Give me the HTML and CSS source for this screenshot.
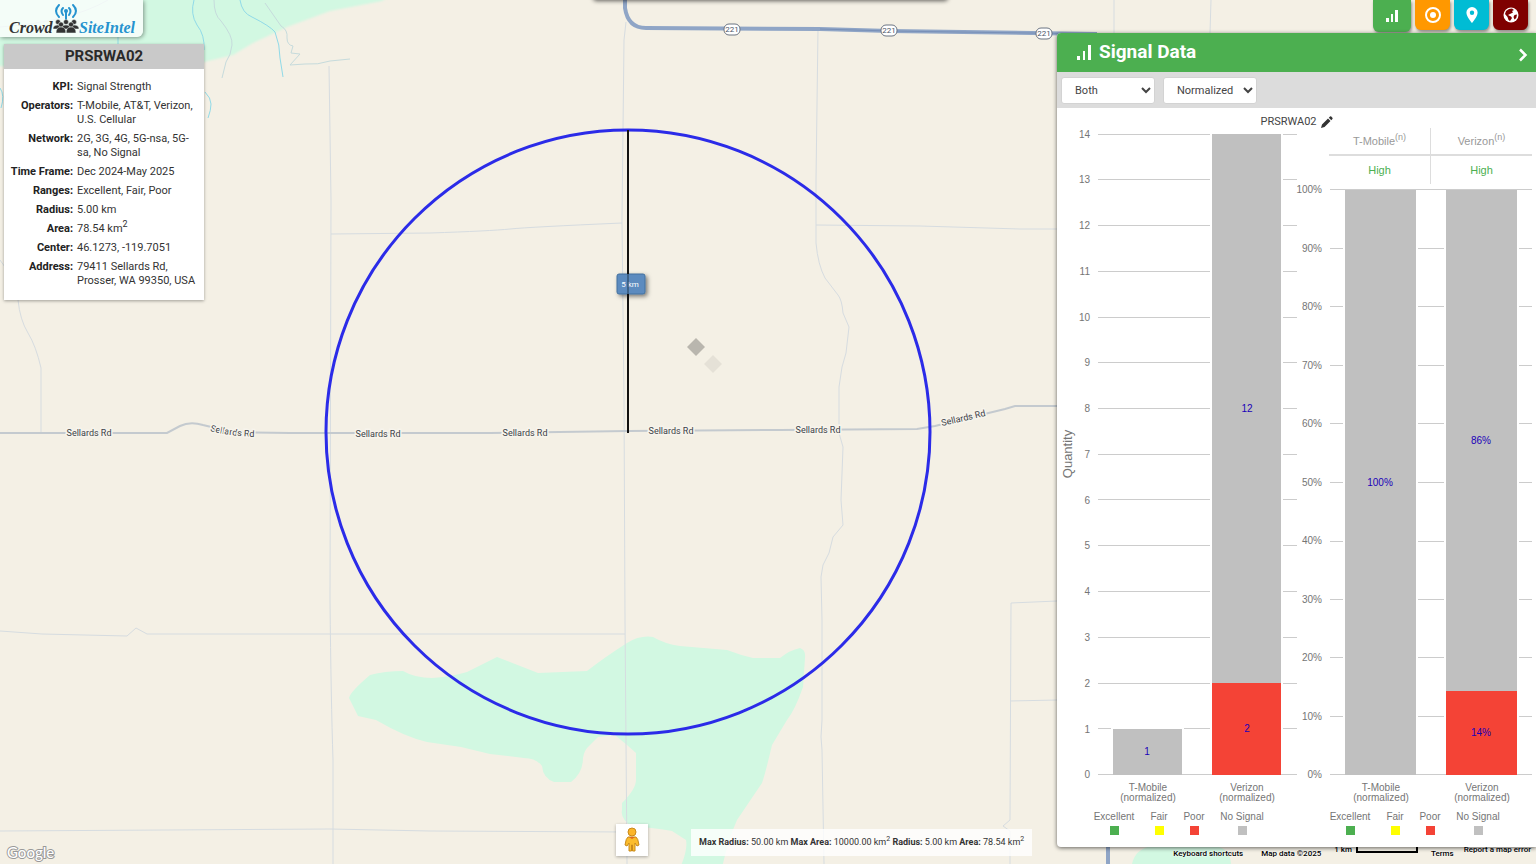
FILE: index.html
```html
<!DOCTYPE html>
<html lang="en">
<head>
<meta charset="utf-8">
<title>Crowd SiteIntel</title>
<link rel="stylesheet" href="styles.css">
</head>
<body>
<main class="app">
  <svg class="map" viewBox="0 0 1536 864" preserveAspectRatio="xMidYMid slice" role="img" aria-label="Map">
    <defs>
      <filter id="soft"><feGaussianBlur stdDeviation="1"/></filter>
      <filter id="tagShadow" x="-50%" y="-50%" width="200%" height="200%"><feDropShadow dx="2" dy="2" stdDeviation="2" flood-opacity=".5"/></filter>
      <path id="bend" d="M210 431Q232 437 264 437"/>
    </defs>
    <g class="park">
      <path filter="url(#soft)" d="M-5 -5H390L382 1L330 11L287 27L253 43L233 55L204 62L100 70L-5 66Z"/>
      <path d="M349 698Q350 692 370 675Q385 671 403 671Q415 678 432 678Q450 677 467 672L497 657L538 673L587 671Q605 657 627 643Q640 635 653 637Q665 644 680 646L727 650Q740 655 753 658L780 658Q790 650 800 648Q806 650 805 658L803 687Q795 710 787 720L772 745Q765 775 762 783L737 820Q728 840 722 868H680Q688 850 686 840L672 831Q650 827 633 827Q620 819 622 810V803Q636 789 636 780V753L627 745L615 735L598 737L590 745Q584 750 583 758Q583 773 571 782H554Q543 778 542 766Q536 758 524 758L490 754L461 747L427 742Q405 737 376 720L358 716Z"/>
      <path d="M1132 864Q1135 850 1150 846H1215Q1230 848 1231 864Z"/>
    </g>
    <g class="river">
      <path d="M194 0Q190 14 197 25Q205 35 204 50"/>
      <path d="M240 0Q242 13 252 17Q270 26 275 32Q280 45 280 58L283 77"/>
      <path d="M205 92Q211 98 211 104Q211 110 208 118M0 88Q5 95 1 108M118 37V45"/>
    </g>
    <g class="trail">
      <path d="M214 0Q214 15 221 21Q233 36 232 45Q231 55 226 62L222 78"/>
      <path d="M265 3L281 26Q288 30 287 38Q287 45 293 46L291 53L300 54L290 65L305 64Q318 65 330 61Q340 60 350 59"/>
      <path d="M0 27Q70 22 108 0"/>
    </g>
    <g class="lane">
      <path d="M329 66L331 200L330 600Q331 700 333 760V864"/>
      <path d="M331 234L430 233Q490 231 510 229T622 223"/>
      <path d="M626 22L624 40L622 220L624 400L625 620L627 864"/>
      <path d="M818 29L816 180V243Q818 265 825 278L838 295Q842 300 843 313L849 327L846 353L842 367L839 387V433L843 447L841 500L843 525L833 537L829 553L823 565L821 577L822 620V720L821 737L822 750L824 864"/>
      <path d="M816 225L920 226L1020 229H1057M1057 601L1011 603L1010 820L1003 826L1010 831V864M1010 701L1057 700M1114 0V33M1211 0L1210 33"/>
      <path d="M0 631L42 634L127 636L136 628L147 634H625M0 831L165 830L330 829L430 831L627 832"/>
      <path d="M0 260Q16 280 18 300T28 333T41 368V433"/>
    </g>
    <path class="road" d="M0 433H167L180 426Q190 421 203 425L232 432L290 433H490L628 431L780 430L917 429L935 426L1005 409L1015 406H1057"/>
    <path class="highway" d="M625 0V8Q628 28 646 28L820 29L890 31L1097 34M1108 840V864"/>
    <path class="highway-core" d="M820 29L890 31L1097 34"/>
    <g class="shield">
      <rect x="724" y="24" width="16" height="11" rx="5"/><text x="732" y="32">221</text>
      <rect x="881" y="25" width="16" height="11" rx="5"/><text x="889" y="33">221</text>
      <rect x="1036" y="28" width="16" height="11" rx="5"/><text x="1044" y="36">221</text>
    </g>
    <g class="road-name">
      <text x="89" y="436">Sellards Rd</text>
      <text class="road-name-bend"><textPath href="#bend">Sellards Rd</textPath></text>
      <text x="378" y="437">Sellards Rd</text>
      <text x="525" y="436">Sellards Rd</text>
      <text x="671" y="434">Sellards Rd</text>
      <text x="818" y="433">Sellards Rd</text>
      <text transform="translate(964 421) rotate(-13)">Sellards Rd</text>
    </g>
    <path fill="#b9b6ae" d="M696 338L705 347L696 356L687 347Z"/>
    <path fill="#e5e1d7" d="M713 355L722 364L713 373L704 364Z"/>
    <circle class="radius-ring" cx="628" cy="432" r="302"/>
    <g filter="url(#tagShadow)"><rect class="tag" x="617" y="274" width="28" height="20" rx="2"/></g>
    <text class="tag-text" x="630" y="287">5 km</text>
    <path d="M628 130V274M628 294V433" stroke="#111" stroke-width="2"/>
    <path d="M628 274V294" stroke="#31506f" stroke-width="2" opacity=".7"/>
  </svg>

  <div class="search-drawer"></div>

  <header class="brand">
    <svg width="143" height="37" viewBox="0 0 143 37" role="img" aria-label="Crowd SiteIntel">
      <g fill="none" stroke="#2693cf" stroke-width="2" stroke-linecap="round">
        <path d="M59 5Q53 11 59 17M73 5Q79 11 73 17M63 8Q60 11 63 15M69 8Q72 11 69 15"/>
        <path d="M66 12V20"/>
      </g>
      <circle cx="66" cy="11" r="2" fill="#2693cf"/>
      <g fill="#333" stroke="#eefaf5" stroke-width=".5">
        <circle cx="58" cy="22" r="2.5"/><circle cx="66" cy="22" r="2.5"/><circle cx="74" cy="22" r="2.5"/>
        <path d="M53 29Q53 25 58 25T63 29ZM61 29Q61 25 66 25T71 29ZM69 29Q69 25 74 25T79 29Z"/>
        <circle cx="61" cy="24.500" r="2.500"/><circle cx="71" cy="24.500" r="2.500"/>
        <path d="M56 33Q56 27 61 27T66 33ZM66 33Q66 27 71 27T76 33Z"/>
      </g>
      <text class="brand-dark" x="9" y="33">Crowd</text>
      <text class="brand-blue" x="79" y="33">SiteIntel</text>
    </svg>
  </header>

  <section class="site">
    <h1 class="site-title">PRSRWA02</h1>
    <dl class="facts">
      <dt>KPI:</dt><dd>Signal Strength</dd>
      <dt>Operators:</dt><dd>T-Mobile, AT&amp;T, Verizon, U.S. Cellular</dd>
      <dt>Network:</dt><dd>2G, 3G, 4G, 5G-nsa, 5G-sa, No Signal</dd>
      <dt>Time Frame:</dt><dd>Dec 2024-May 2025</dd>
      <dt>Ranges:</dt><dd>Excellent, Fair, Poor</dd>
      <dt>Radius:</dt><dd>5.00 km</dd>
      <dt>Area:</dt><dd>78.54 km<sup>2</sup></dd>
      <dt>Center:</dt><dd>46.1273, -119.7051</dd>
      <dt>Address:</dt><dd>79411 Sellards Rd, Prosser, WA 99350, USA</dd>
    </dl>
  </section>

  <svg class="google" width="60" height="24" viewBox="0 0 60 24" role="img" aria-label="Google"><text x="3" y="18">Google</text></svg>

  <button class="pegman" type="button" aria-label="Street View">
    <svg width="16" height="26" viewBox="0 0 16 26">
      <path d="M4 10Q2 11 1 18L3 19L5 16V24H7.500V18H8.500V24H11V16L13 19L15 18Q14 11 12 10Z" fill="#fbbc2c" stroke="#c98a1b"/>
      <circle cx="8" cy="5" r="4" fill="#fbb52a" stroke="#c98a1b"/>
      <path d="M5 10H11L8 12Z" fill="#e0661c"/>
    </svg>
  </button>

  <p class="limits"><b>Max Radius:</b> 50.00 km <b>Max Area:</b> 10000.00 km<sup>2</sup> <b>Radius:</b> 5.00 km <b>Area:</b> 78.54 km<sup>2</sup></p>

  <footer class="credits">
    <button type="button">Keyboard shortcuts</button>
    <span>Map data ©2025</span>
    <span class="scale">1 km <i></i></span>
    <a href="#terms">Terms</a>
    <a class="raised" href="#report">Report a map error</a>
  </footer>

  <nav class="tabs">
    <button class="tab tab-signal" type="button" aria-label="Signal data">
      <svg width="14" height="14" viewBox="0 0 14 14"><path fill="#fff" d="M1 9h3v4H1zM6 5h2v8H6zM10 1h3v12h-3z"/></svg>
    </button>
    <button class="tab tab-target" type="button" aria-label="Target">
      <svg width="16" height="16" viewBox="0 0 16 16"><circle cx="8" cy="8" r="7" fill="none" stroke="#fff" stroke-width="2"/><circle cx="8" cy="8" r="3" fill="#fff"/></svg>
    </button>
    <button class="tab tab-pin" type="button" aria-label="Places">
      <svg width="12" height="16" viewBox="0 0 12 16"><path fill="#fff" fill-rule="evenodd" d="M6 0A5.600 5.600 0 0 0 .4 5.600C.4 10 6 16 6 16S11.600 10 11.600 5.600A5.600 5.600 0 0 0 6 0ZM6 3.500A2.200 2.200 0 1 1 6 7.900A2.200 2.200 0 1 1 6 3.500Z"/></svg>
    </button>
    <button class="tab tab-globe" type="button" aria-label="World">
      <svg width="16" height="16" viewBox="0 0 16 16"><circle cx="8" cy="8" r="7.500" fill="#fff"/><path fill="#7f0000" d="M6 2L9 1.500L11 3L9 4L10 5.500L7 7L5 8L8 9.500L9 11L7 14Q5 13 4.500 10L2 7L3 4ZM11.500 8L14 7.500Q14 11 11.500 12.500L10.500 10Z"/></svg>
    </button>
  </nav>

  <aside class="panel">
    <header class="panel-head">
      <svg width="16" height="16" viewBox="0 0 16 16"><path fill="#fff" d="M1 11h3v4H1zM7 6h2v9H7zM12 0h3v15h-3z"/></svg>
      <h2>Signal Data</h2>
      <button type="button" aria-label="Collapse panel"><svg width="10" height="14" viewBox="0 0 10 14"><path d="M2 1.500L7.500 7L2 12.500" fill="none" stroke="#fff" stroke-width="2.500"/></svg></button>
    </header>
    <div class="filters">
      <select aria-label="Chart"><option>Both</option></select>
      <select aria-label="Mode"><option>Normalized</option></select>
    </div>
    <div class="caption"><span>PRSRWA02</span>
      <svg width="12" height="12" viewBox="0 0 12 12"><path fill="#333" d="M0 12L1 8.500L7 2.500L9.500 5L3.500 11ZM7.800 1.700L9 .5Q9.700 0 10.300.6L11.400 1.700Q12 2.300 11.400 3L10.300 4.200Z"/></svg>
    </div>
    <div class="charts">
      <svg class="chart" viewBox="0 0 241 719" role="img" aria-label="Quantity by operator">
        <path class="grid" d="M41 6.500H240M41 51.500H240M41 97.500H240M41 143.500H240M41 189.500H240M41 234.500H240M41 280.500H240M41 326.500H240M41 371.500H240M41 417.500H240M41 463.500H240M41 509.500H240M41 555.500H240M41 600.500H240M41 646.500H240"/>
        <g class="gap"><rect x="54" y="599" width="73" height="47"/><rect x="153" y="6" width="73" height="640"/></g>
        <g class="none"><rect x="56" y="601" width="69" height="46"/><rect x="155" y="6" width="69" height="549"/></g>
        <rect class="poor" x="155" y="555" width="69" height="92"/>
        <g class="tick">
          <text x="33" y="10">14</text><text x="33" y="55">13</text><text x="33" y="101">12</text><text x="33" y="147">11</text><text x="33" y="193">10</text>
          <text x="33" y="238">9</text><text x="33" y="284">8</text><text x="33" y="330">7</text><text x="33" y="376">6</text><text x="33" y="421">5</text>
          <text x="33" y="467">4</text><text x="33" y="513">3</text><text x="33" y="559">2</text><text x="33" y="605">1</text><text x="33" y="650">0</text>
        </g>
        <g class="value"><text x="90" y="627">1</text><text x="190" y="284">12</text><text x="190" y="604">2</text></g>
        <text class="axis-title" transform="translate(15 326) rotate(-90)">Quantity</text>
        <g class="label">
          <text x="91" y="663">T-Mobile</text><text x="91" y="673">(normalized)</text>
          <text x="190" y="663">Verizon</text><text x="190" y="673">(normalized)</text>
          <text x="57" y="692">Excellent</text><text x="102" y="692">Fair</text><text x="137" y="692">Poor</text><text x="185" y="692">No Signal</text>
        </g>
        <rect class="excellent" x="53" y="698" width="9" height="9"/><rect class="fair" x="98" y="698" width="9" height="9"/><rect class="poor" x="133" y="698" width="9" height="9"/><rect class="none" x="181" y="698" width="9" height="9"/>
      </svg>
      <div class="share">
        <table class="rating">
          <thead><tr><th>T-Mobile<sup>(n)</sup></th><th>Verizon<sup>(n)</sup></th></tr></thead>
          <tbody><tr><td>High</td><td>High</td></tr></tbody>
        </table>
        <svg class="chart" viewBox="0 0 238 663" role="img" aria-label="Share by operator">
          <path class="grid" d="M32 5.500H234M32 64.500H234M32 122.500H234M32 181.500H234M32 239.500H234M32 298.500H234M32 357.500H234M32 415.500H234M32 473.500H234M32 532.500H234M32 590.500H234"/>
          <g class="gap"><rect x="45" y="6" width="75" height="584"/><rect x="146" y="6" width="75" height="584"/></g>
          <g class="none"><rect x="47" y="6" width="71" height="585"/><rect x="148" y="6" width="71" height="502"/></g>
          <rect class="poor" x="148" y="507" width="71" height="84"/>
          <g class="tick">
            <text x="24" y="9">100%</text><text x="24" y="68">90%</text><text x="24" y="126">80%</text><text x="24" y="185">70%</text><text x="24" y="243">60%</text><text x="24" y="302">50%</text>
            <text x="24" y="360">40%</text><text x="24" y="419">30%</text><text x="24" y="477">20%</text><text x="24" y="536">10%</text><text x="24" y="594">0%</text>
          </g>
          <g class="value"><text x="82" y="302">100%</text><text x="183" y="260">86%</text><text x="183" y="552">14%</text></g>
          <g class="label">
            <text x="83" y="607">T-Mobile</text><text x="83" y="617">(normalized)</text>
            <text x="184" y="607">Verizon</text><text x="184" y="617">(normalized)</text>
            <text x="52" y="636">Excellent</text><text x="97" y="636">Fair</text><text x="132" y="636">Poor</text><text x="180" y="636">No Signal</text>
          </g>
          <rect class="excellent" x="48" y="642" width="9" height="9"/><rect class="fair" x="93" y="642" width="9" height="9"/><rect class="poor" x="128" y="642" width="9" height="9"/><rect class="none" x="176" y="642" width="9" height="9"/>
        </svg>
      </div>
    </div>
  </aside>
</main>
</body>
</html>
```
FILE: styles.css
```css
* { box-sizing: border-box; }
body { margin: 0; font-family: Roboto, "Liberation Sans", sans-serif; color: #333; }
button { border: 0; padding: 0; font: inherit; color: inherit; cursor: pointer; }
svg { display: block; }
sup { line-height: 0; }

.app { position: relative; height: 100vh; min-height: 600px; overflow: hidden; background: #f4f0e5; }
.map { width: 100%; height: 100%; }
.map path { fill: none; }
.map .park path { fill: #d2f8e2; }
.map path[fill] { fill: revert-layer; }
.river { stroke: #90dae8; stroke-width: 1; }
.trail { stroke: #c6dbdc; stroke-width: 1; }
.lane { stroke: #d6dce0; stroke-width: 1; }
.road { stroke: #c4cacf; stroke-width: 2; }
.highway { stroke: #8fa5c6; stroke-width: 4; }
.highway-core { stroke: #7890b8; stroke-width: 1; }
.shield rect { fill: #fff; stroke: #6b7482; }
.shield text { font: 8px Roboto, sans-serif; fill: #4a5568; text-anchor: middle; }
.road-name text { font: 9px Roboto, sans-serif; fill: #3c4248; text-anchor: middle; stroke: #f7f4ec; stroke-width: 3px; paint-order: stroke; }
.road-name .road-name-bend { text-anchor: start; }
.radius-ring { fill: none; stroke: #2b2be8; stroke-width: 3; }
.tag { fill: #5b8bbf; stroke: #44719f; }
.tag-text { font: 8px Roboto, sans-serif; fill: #fff; text-anchor: middle; }

.search-drawer { position: absolute; top: -10px; left: 50%; width: 355px; height: 10px; margin-left: -175px; border-radius: 0 0 4px 4px; box-shadow: 0 1px 4px rgba(0, 0, 0, .6); }

.brand { position: absolute; top: 0; left: 0; background: rgba(255, 255, 255, .75); border-radius: 0 0 6px 0; box-shadow: 1px 1px 4px rgba(0, 0, 0, .4); }
.brand text { font: italic bold 16px "Liberation Serif", serif; }
.brand-dark { fill: #333; }
.brand-blue { fill: #2693cf; }

.site { position: absolute; top: 44px; left: 4px; width: 200px; background: #fff; box-shadow: 0 1px 3px rgba(0, 0, 0, .35); }
.site-title { margin: 0; background: #c9c9c9; font-size: 15px; line-height: 25px; text-align: center; color: #2a2a2a; }
.facts { display: grid; grid-template-columns: 69px 1fr; gap: 5px 4px; margin: 0; padding: 11px 4px 12px 0; font-size: 11px; line-height: 14px; }
.facts dt { font-weight: 700; text-align: right; white-space: nowrap; color: #222; justify-self: end; }
.facts dd { margin: 0; }
.facts sup { font-size: 9px; }

.google { position: absolute; left: 4px; bottom: 0; }
.google text { font: 500 15px Lato, sans-serif; fill: #fff; stroke: #999; stroke-width: 2px; paint-order: stroke; }

.pegman { position: absolute; left: 616px; bottom: 8px; display: grid; place-items: center; width: 32px; height: 32px; background: #fff; box-shadow: 0 1px 3px rgba(0, 0, 0, .3); }
.limits { position: absolute; left: 691px; bottom: 8px; margin: 0; padding: 0 8px; background: rgba(255, 255, 255, .8); font-size: 9px; line-height: 27px; white-space: nowrap; }
.limits sup { font-size: 7px; }

.credits { position: absolute; right: 5px; bottom: 0; display: flex; align-items: center; font-size: 8px; font-weight: 500; line-height: 12px; color: #000; white-space: nowrap; text-shadow: 0 0 2px #fff, 0 0 2px #fff; }
.credits button { background: none; margin-right: 18px; text-shadow: inherit; }
.credits a { color: #000; text-decoration: none; }
.credits .scale { display: flex; gap: 4px; margin: 0 13px; padding-bottom: 8px; }
.scale i { width: 62px; height: 9px; border: 2px solid #000; border-top: 0; }
.credits .raised { margin-left: 10px; padding-bottom: 8px; }

.tabs { position: absolute; top: 0; right: 8px; display: flex; gap: 4px; align-items: flex-start; }
.tab { display: grid; place-items: center; width: 35px; height: 30px; border-radius: 0 0 6px 6px; box-shadow: 1px 2px 3px rgba(0, 0, 0, .4); }
.tab-signal { width: 38px; height: 32px; background: #4caf50; }
.tab-target { background: #ff9800; }
.tab-pin { background: #00bcd4; }
.tab-globe { background: #7f0000; }

.panel { position: absolute; top: 33px; right: 0; width: 479px; background: #fff; border-radius: 4px 0 0 4px; overflow: hidden; box-shadow: 0 1px 4px rgba(0, 0, 0, .6); }
.panel-head { display: flex; align-items: center; gap: 7px; height: 39px; padding: 0 8px 0 19px; background: #4caf50; color: #fff; }
.panel-head h2 { flex: 1; margin: 0; padding-bottom: 2px; font-size: 19px; line-height: 37px; }
.panel-head button { background: none; padding-top: 4px; }
.filters { display: flex; gap: 8px; height: 36px; padding: 5px 4px; background: #dcdcdc; }
.filters select { width: 94px; height: 27px; padding: 0 0 0 9px; border: 1px solid #d3d3d3; border-radius: 3px; background: #fff; font: 11px Roboto, sans-serif; color: #444; }
.caption { display: flex; justify-content: center; align-items: center; gap: 4px; height: 20px; padding-top: 8px; font-size: 11px; line-height: 12px; color: #444; }
.charts { display: grid; grid-template-columns: 241fr 238fr; align-items: start; }
.chart { width: 100%; overflow: visible; font-family: "Liberation Sans", Arial, sans-serif; }
.grid { stroke: #ccc; fill: none; }
.gap { fill: #fff; }
.none { fill: #c0c0c0; }
.poor { fill: #f44336; }
.excellent { fill: #4caf50; }
.fair { fill: #ff0; }
.tick { font-size: 10px; fill: #757575; text-anchor: end; }
.label { font-size: 10px; fill: #757575; text-anchor: middle; }
.value { font-size: 10px; fill: #1a00b8; text-anchor: middle; }
.axis-title { font-size: 13px; fill: #757575; text-anchor: middle; }
.rating { width: calc(100% - 35px); height: 56px; margin: 0 4px 0 31px; border-collapse: collapse; table-layout: fixed; font: 11px "Liberation Sans", Arial, sans-serif; text-align: center; }
.rating th { height: 27px; padding: 0; border-bottom: 2px solid #ddd; font-weight: 400; color: #999; }
.rating td { height: 29px; padding: 0; color: #4caf50; }
.rating th + th, .rating td + td { border-left: 1px solid #ddd; }
.rating sup { font-size: 9px; }
```
